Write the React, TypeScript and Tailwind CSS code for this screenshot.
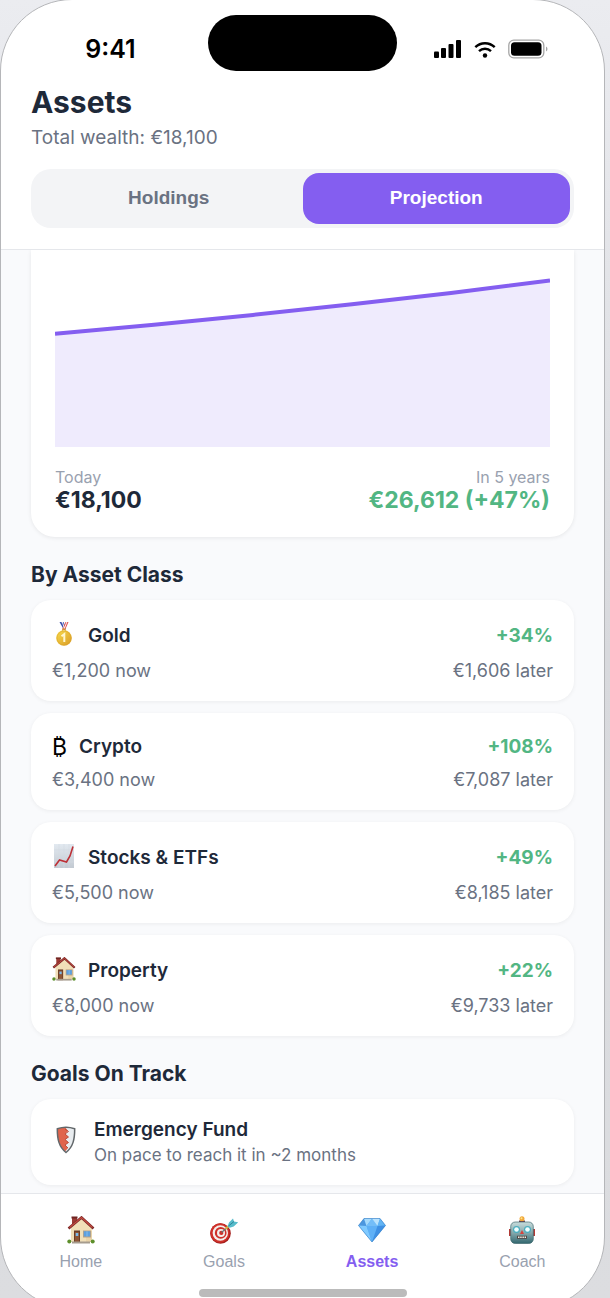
import { useState } from 'react';

type Asset = {
  name: string;
  icon: React.ReactNode;
  compact?: boolean;
  now: string;
  later: string;
  change: string;
};

function HouseIcon({ className }: { className: string }) {
  return (
    <svg viewBox="0 0 28 28" className={className} aria-hidden="true">
      <path d="M5 1h5v8H5z" fill="#9c3b35" />
      <path d="M4.5 .5h6v2h-6z" fill="#6f2522" />
      <path d="M4 11 15 2l10 9v15H4z" fill="#f1dfb8" />
      <path d="M19 15h6v11h-6z" fill="#e5cc9c" opacity=".6" />
      <path d="M1.5 12.5 14.5 1.5l12 11" fill="none" stroke="#7d2a28" strokeWidth="2.6" />
      <path d="M2.5 11.5 14.5 1.5l11 10" fill="none" stroke="#c34a40" strokeWidth="1.1" />
      <path d="M7 14.5h6V27H7z" fill="#6b3d26" />
      <path d="M8 16h4v10H8z" fill="#8e5534" />
      <path d="M8.7 17h2.6v3H8.7z" fill="#7cb9ea" />
      <path d="M16 14.5h8v7h-8z" fill="#b9a184" />
      <path d="M16.8 15.3h6.4v5.2h-6.4z" fill="#5da0df" />
      <path d="M20 15.3v5.2" stroke="#93c6f2" strokeWidth=".7" />
      <path d="M5 26.5h18" stroke="#a69c8e" strokeWidth="2" />
      <circle cx="2.3" cy="25.6" r="2" fill="#5d8f2c" />
      <circle cx="25.7" cy="25.6" r="2" fill="#5d8f2c" />
    </svg>
  );
}

function MedalIcon({ className }: { className: string }) {
  return (
    <svg viewBox="0 0 24 24" className={className} aria-hidden="true">
      <defs>
        <linearGradient id="medal" x1="0" y1="0" x2="1" y2="1">
          <stop offset="0" stopColor="#f8dc4e" />
          <stop offset="1" stopColor="#d99a24" />
        </linearGradient>
      </defs>
      <path d="M7.5 0h4l2.5 6-2 2z" fill="#3c4fae" />
      <path d="M16.5 0h-3L10 7.5l3 .5z" fill="#e05050" />
      <path d="M9.3 0h1l2 6M14.8 0l-2.6 7" fill="none" stroke="#fff" strokeWidth=".9" />
      <circle cx="12" cy="8.2" r="1.5" fill="none" stroke="#d9a62e" />
      <circle cx="12" cy="16" r="7.8" fill="url(#medal)" />
      <circle cx="12" cy="16" r="7" fill="none" stroke="#d9a02a" strokeWidth=".5" />
      <path d="m9.5 14.2 2.8-2.2v8" fill="none" stroke="#fff6cf" strokeWidth="2" />
    </svg>
  );
}

function TrendIcon({ className }: { className: string }) {
  return (
    <svg viewBox="0 0 24 24" className={className} aria-hidden="true">
      <defs>
        <linearGradient id="sheet" x1="0" y1="0" x2="0" y2="1">
          <stop offset="0" stopColor="#e2e9f0" />
          <stop offset="1" stopColor="#c3cad2" />
        </linearGradient>
      </defs>
      <path d="M2 0h20v24H2z" fill="url(#sheet)" />
      <path d="M7 0v24M12 0v24M17 0v24M2 6h20M2 12h20M2 18h20" stroke="#d3dae2" strokeWidth=".6" />
      <path d="m3 22 4.500-6 7 2 3.500-6 3-9.500" fill="none" stroke="#bd3036" strokeWidth="1.600" />
    </svg>
  );
}

function ShieldIcon({ className }: { className: string }) {
  return (
    <svg viewBox="0 0 28 28" className={className} aria-hidden="true">
      <path d="M14 .8c3 0 6 .6 9 1.7 0 11-1.5 18.5-9 24.5C6.500 21 5 13.500 5 2.500 8 1.400 11 .8 14 .8z" fill="#e9edf0" />
      <path d="M13 1 5.500 2.800c0 10 1.500 17.500 7.500 22.700l3-3.500-3-3 3.500-2.500-3.500-3 3.500-2.500-3.500-3L16 5z" fill="#e0644c" />
      <path d="m13 3 3.500 2.500L13 8l3.500 3-3.500 2.500 3.500 3L13 19l3 3" fill="none" stroke="#b9432f" strokeWidth=".9" />
      <path d="M14 1.200c3 0 6 .6 8.700 1.500 0 10.500-1.500 18-8.700 23.800C6.800 20.700 5.300 13.200 5.300 2.700 8 1.800 11 1.200 14 1.200z" fill="none" stroke="#62676a" strokeWidth="1.500" />
    </svg>
  );
}

function TargetIcon({ className }: { className: string }) {
  return (
    <svg viewBox="0 0 28 28" className={className} aria-hidden="true">
      <circle cx="10.500" cy="17.500" r="10.300" fill="#a51f1d" />
      <circle cx="10" cy="17" r="9.700" fill="#cf3029" />
      <circle cx="10.300" cy="17" r="7.700" fill="#f4efec" />
      <circle cx="10.700" cy="16.900" r="5.900" fill="#cf3029" />
      <circle cx="11" cy="16.900" r="4" fill="#f4efec" />
      <circle cx="11.300" cy="16.900" r="2.100" fill="#cf3029" />
      <path d="M11.500 16.500 19 10" stroke="#6b7477" strokeWidth="1.200" />
      <path d="m15.500 12.800 4-3.300" stroke="#d7b53e" strokeWidth="2" />
      <path d="m17.500 10.500 1.500-4 4-4 1 3 4.200.9-4.500 4.100-4 1.300z" fill="#57bccb" />
      <path d="m18.500 10 5.500-4.500" stroke="#2d8497" strokeWidth="1" />
    </svg>
  );
}

function DiamondIcon({ className }: { className: string }) {
  return (
    <svg viewBox="0 0 28 28" className={className} aria-hidden="true">
      <path d="M6 2.500h16l5.500 7L14 26 .5 9.500z" fill="#55aef5" />
      <path d="M6 2.500 8.500 10H.5z" fill="#4c97df" />
      <path d="M6 2.500h8L8.500 10z" fill="#a6dafc" />
      <path d="m14 2.500 5.500 7.500h-11z" fill="#73bdf8" />
      <path d="M14 2.500h8L19.500 10z" fill="#b9e2fd" />
      <path d="m22 2.500 5.500 7-8 .5z" fill="#62b4f4" />
      <path d="m.5 9.500 8 .5L14 26z" fill="#80caff" />
      <path d="M8.500 10h11L14 26z" fill="#5fb0f6" />
      <path d="m27.500 9.500-8 .5L14 26z" fill="#3f90e4" />
      <path d="M6 2.500h16l5.500 7L14 26 .5 9.500z" fill="none" stroke="#3b80c5" strokeWidth=".6" />
    </svg>
  );
}

function RobotIcon({ className }: { className: string }) {
  return (
    <svg viewBox="0 0 28 28" className={className} aria-hidden="true">
      <defs>
        <linearGradient id="robot" x1="0" y1="0" x2="0" y2="1">
          <stop offset="0" stopColor="#c8dddd" />
          <stop offset=".55" stopColor="#7fa3a7" />
          <stop offset="1" stopColor="#31666e" />
        </linearGradient>
      </defs>
      <path d="M1 13h3v7H1zM24 13h3v7h-3z" fill="#b23a35" />
      <path d="M11 4.500h6V7h-6z" fill="#69394e" />
      <circle cx="14" cy="2.800" r="2.500" fill="#f2a83a" />
      <circle cx="13.500" cy="2.200" r="1" fill="#fde58c" />
      <rect x="2.700" y="6" width="22.600" height="21.500" rx="4.500" fill="url(#robot)" stroke="#426a70" strokeWidth=".7" />
      <circle cx="8.500" cy="13.500" r="3.500" fill="#49aebf" />
      <circle cx="8.500" cy="13.500" r="2.300" fill="#f2ffff" />
      <circle cx="19.500" cy="13.500" r="3.500" fill="#49aebf" />
      <circle cx="19.500" cy="13.500" r="2.300" fill="#f2ffff" />
      <path d="m14 14 2 4h-4z" fill="#d8413b" />
      <path d="M9 19.700h10v3H9z" fill="#514542" />
      <path d="M10 21.200h8" stroke="#f3eee4" strokeWidth="1.600" strokeDasharray="1.500 .7" />
    </svg>
  );
}

const ASSETS: Asset[] = [
  { name: 'Gold', icon: <MedalIcon className="mb-1 size-6" />, now: '€1,200', later: '€1,606', change: '+34%' },
  { name: 'Crypto', icon: '₿', compact: true, now: '€3,400', later: '€7,087', change: '+108%' },
  { name: 'Stocks & ETFs', icon: <TrendIcon className="mb-1 size-6" />, now: '€5,500', later: '€8,185', change: '+49%' },
  { name: 'Property', icon: <HouseIcon className="mb-1 size-6" />, now: '€8,000', later: '€9,733', change: '+22%' },
];

const NAV = [
  { label: 'Home', Icon: HouseIcon },
  { label: 'Goals', Icon: TargetIcon },
  { label: 'Assets', Icon: DiamondIcon },
  { label: 'Coach', Icon: RobotIcon },
];

const PROJECTION = [18100, 19548, 21114, 22804, 24631, 26612];

function StatusBar() {
  return (
    <div className="grid h-[84px] grid-cols-[1fr_189px_1fr] pt-[15px] text-black">
      <div className="flex h-[70px] items-center justify-center pl-3 text-[25px] font-semibold">9:41</div>
      <div className="h-14 rounded-full bg-black" />
      <div className="flex h-[67px] items-center justify-center gap-3 pr-6 pl-1">
        <svg viewBox="0 0 28 18" className="h-[18px] w-7 shrink-0">
          <rect x="0" y="11.500" width="5" height="6.500" rx="1" />
          <rect x="7" y="8" width="5" height="10" rx="1" />
          <rect x="14.500" y="4" width="5" height="14" rx="1" />
          <rect x="22" y="0" width="5" height="18" rx="1" />
        </svg>
        <svg viewBox="0 0 22 18" className="h-[18px] w-[22px] shrink-0" fill="none" stroke="currentColor" strokeWidth="2.400">
          <path d="M1.300 7.200a14 14 0 0 1 19.400 0" />
          <path d="M5 11.200a8.700 8.700 0 0 1 12 0" />
          <circle cx="11" cy="15.500" r="2.200" fill="currentColor" stroke="none" />
        </svg>
        <svg viewBox="0 0 40 20" className="h-5 w-10 shrink-0">
          <rect x=".8" y="1.200" width="35" height="17.600" rx="5" fill="none" stroke="#a5a5a5" strokeWidth="1.300" />
          <rect x="3" y="3.200" width="30.500" height="13.600" rx="3.500" />
          <path d="M38 7.500c2 1 2 4 0 5z" fill="#a5a5a5" />
        </svg>
      </div>
    </div>
  );
}

function ProjectionChart() {
  const points = PROJECTION.map((v, i) => `${i * 99},${(197 - (v / 26612) * 166.5).toFixed(1)}`).join(' ');

  return (
    <svg viewBox="0 0 495 197" preserveAspectRatio="none" className="block h-[197px] w-full" role="img" aria-label="Projected wealth">
      <polygon points={`0,197 ${points} 495,197`} fill="#efebfd" />
      <polyline points={points} fill="none" stroke="#845ef0" strokeWidth="4" vectorEffect="non-scaling-stroke" />
    </svg>
  );
}

function AssetCard({ asset }: { asset: Asset }) {
  return (
    <li className="rounded-[20px] bg-white px-[21px] py-5 shadow-[0_1px_4px_rgba(0,0,0,0.06)]">
      <div className={`flex items-center justify-between ${asset.compact ? 'h-7' : 'h-8'}`}>
        <div className="flex items-center gap-3">
          <span className="text-[23px] leading-6 text-black">{asset.icon}</span>
          <h3 className="text-[19px] font-semibold text-gray-800">{asset.name}</h3>
        </div>
        <span className="text-[19px] font-bold text-[#52b683]">{asset.change}</span>
      </div>
      <div className="mt-2 flex justify-between text-[18px] leading-[21px] text-gray-500">
        <span>{asset.now} now</span>
        <span>{asset.later} later</span>
      </div>
    </li>
  );
}

export default function App() {
  const [view, setView] = useState('Projection');
  const [tab, setTab] = useState('Assets');

  return (
    <div className="h-screen overflow-hidden bg-linear-to-b from-[#ebecf0] via-[#d8d9dd] to-[#dcdde0] font-['Inter','Liberation_Sans',sans-serif]">
      <div className="-mt-px mr-[5px] flex h-[calc(100vh+12px)] flex-col overflow-hidden rounded-[72px] border border-[#b5b6b9] bg-white">
        <header className="border-b border-gray-200 pb-[21px]">
          <StatusBar />
          <div className="px-[30px]">
            <h1 className="text-[30px] leading-9 font-bold text-gray-800">Assets</h1>
            <p className="mt-1 text-[19px] leading-7 text-gray-500">Total wealth: €18,100</p>
            <div className="mt-[17px] flex rounded-[20px] bg-gray-100 p-1">
              {['Holdings', 'Projection'].map((label) => (
                <button
                  key={label}
                  onClick={() => setView(label)}
                  className={`h-[51px] flex-1 rounded-2xl font-['Liberation_Sans',Arial,sans-serif] text-[19px] font-bold ${
                    view === label ? 'bg-[#845ef0] text-white' : 'text-gray-500'
                  }`}
                >
                  {label}
                </button>
              ))}
            </div>
          </div>
        </header>

        <main className="flex-1 overflow-hidden bg-[#f9fafc] px-[30px]">
          <section className="rounded-b-3xl bg-white p-6 pt-0 shadow-[0_1px_4px_rgba(0,0,0,0.08)]">
            <ProjectionChart />
            <div className="mt-5 flex justify-between">
              <div>
                <p className="text-[16px] leading-5 text-gray-400">Today</p>
                <p className="text-[23px] leading-[26px] font-bold text-gray-800">€18,100</p>
              </div>
              <div className="text-right">
                <p className="text-[16px] leading-5 text-gray-400">In 5 years</p>
                <p className="text-[23px] leading-[26px] font-bold text-[#52b683]">€26,612 (+47%)</p>
              </div>
            </div>
          </section>

          <h2 className="mt-6 mb-3 text-[21px] leading-[27px] font-bold text-gray-800">By Asset Class</h2>
          <ul className="flex flex-col gap-3">
            {ASSETS.map((asset) => (
              <AssetCard key={asset.name} asset={asset} />
            ))}
          </ul>

          <h2 className="mt-6 mb-3 text-[21px] leading-[27px] font-bold text-gray-800">Goals On Track</h2>
          <section className="flex h-[86px] items-center gap-[14px] rounded-[20px] bg-white px-[21px] shadow-[0_1px_4px_rgba(0,0,0,0.06)]">
            <ShieldIcon className="mb-1 size-7" />
            <div>
              <h3 className="text-[19px] leading-[26px] font-semibold text-gray-800">Emergency Fund</h3>
              <p className="text-[17px] leading-6 text-gray-500">On pace to reach it in ~2 months</p>
            </div>
          </section>
        </main>

        <nav className="flex h-24 shrink-0 justify-around border-t border-gray-200 px-2 pt-[22px] font-['Liberation_Sans',Arial,sans-serif]">
          {NAV.map(({ label, Icon }) => (
            <button
              key={label}
              onClick={() => setTab(label)}
              className={`flex flex-col items-center gap-2 px-2 text-[16px] leading-5 ${
                tab === label ? 'font-bold text-[#845ef0]' : 'text-gray-400'
              }`}
            >
              <Icon className="size-7" />
              {label}
            </button>
          ))}
        </nav>
        <div className="mb-[11px] h-2 w-52 shrink-0 self-center rounded-full bg-[#bbb]" />
      </div>
    </div>
  );
}
